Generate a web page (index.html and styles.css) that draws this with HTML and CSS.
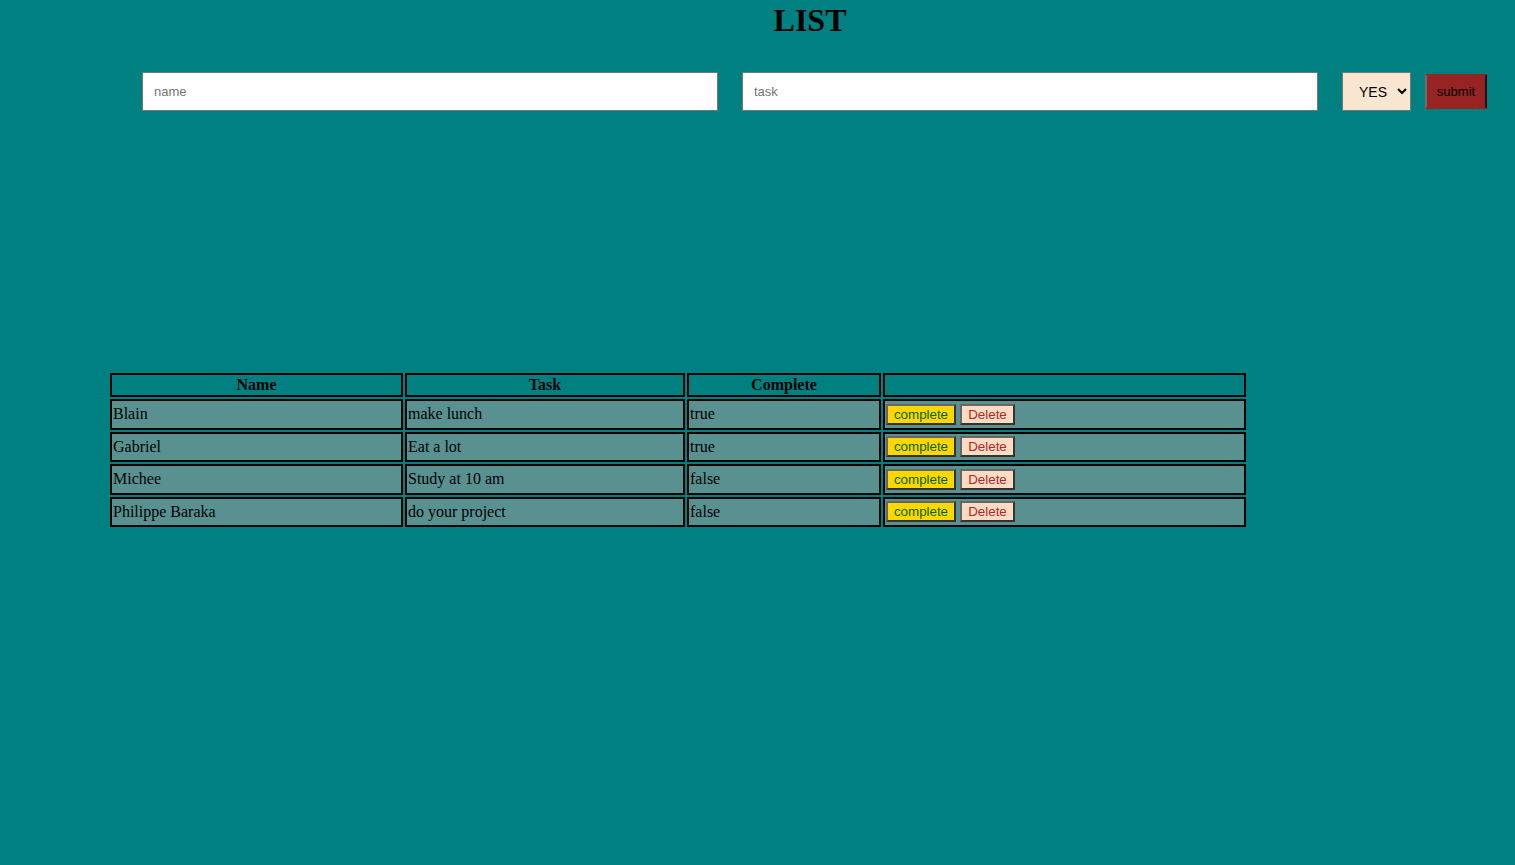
FILE: index.html
```html
<!DOCTYPE html>
<html>
<head>
<meta charset="utf-8">
<title>LIST</title>
<link rel="stylesheet" href="styles.css">
</head>
<body>
<h1 class="title">LIST</h1>
<form class="entry">
  <input class="field field-name" type="text" placeholder="name">
  <input class="field field-task" type="text" placeholder="task">
  <select class="choice">
    <option>YES</option>
    <option>NO</option>
  </select>
  <button class="submit" type="button">submit</button>
</form>
<table class="list">
  <thead>
    <tr>
      <th class="col-name">Name</th>
      <th class="col-task">Task</th>
      <th class="col-complete">Complete</th>
      <th class="col-actions"></th>
    </tr>
  </thead>
  <tbody>
    <tr>
      <td>Blain</td><td>make lunch</td><td>true</td>
      <td><button class="btn btn-complete">complete</button> <button class="btn btn-delete">Delete</button></td>
    </tr>
    <tr>
      <td>Gabriel</td><td>Eat a lot</td><td>true</td>
      <td><button class="btn btn-complete">complete</button> <button class="btn btn-delete">Delete</button></td>
    </tr>
    <tr>
      <td>Michee</td><td>Study at 10 am</td><td>false</td>
      <td><button class="btn btn-complete">complete</button> <button class="btn btn-delete">Delete</button></td>
    </tr>
    <tr>
      <td>Philippe Baraka</td><td>do your project</td><td>false</td>
      <td><button class="btn btn-complete">complete</button> <button class="btn btn-delete">Delete</button></td>
    </tr>
  </tbody>
</table>
</body>
</html>
```
FILE: styles.css
```css
html, body {
  margin: 0;
  padding: 0;
}
body {
  background: #008080;
  font-family: "Liberation Serif", "Times New Roman", serif;
  color: #000;
  min-height: 865px;
}
.title {
  margin: 0;
  padding: 2px 0 0 105px;
  text-align: center;
  font-size: 32px;
  line-height: 37px;
  font-weight: bold;
}
.entry {
  display: flex;
  align-items: center;
  margin-top: 33px;
  padding-left: 142px;
}
.field {
  box-sizing: border-box;
  width: 576px;
  height: 39px;
  border: 1px solid #767676;
  padding: 0 11px;
  font-family: "Liberation Sans", Arial, sans-serif;
  font-size: 13px;
  background: #fff;
  color: #000;
}
.field::placeholder {
  color: #757575;
}
.field-name {
  margin-right: 24px;
}
.field-task {
  margin-right: 24px;
}
.choice {
  box-sizing: border-box;
  width: 69px;
  height: 39px;
  border: 1px solid #767676;
  background: #f9e6d1;
  font-family: "Liberation Sans", Arial, sans-serif;
  font-size: 14px;
  padding: 0 0 0 12px;
  color: #000;
  margin-right: 14px;
}
.submit {
  box-sizing: border-box;
  width: 62px;
  height: 35px;
  background: #982323;
  border: 2px solid;
  border-color: #982323 #2a1010 #982323 #6e6e6e;
  font-family: "Liberation Sans", Arial, sans-serif;
  font-size: 13px;
  color: #000;
  padding: 0;
}
.list {
  margin: 260px 0 0 108px;
  width: 1140px;
  border-spacing: 2px;
  font-size: 16px;
}
.list th, .list td {
  border: 2px solid #000;
  padding: 1px;
}
.list th {
  height: 18px;
  line-height: 18px;
  text-align: center;
  font-weight: bold;
}
.list td {
  background: #599191;
  height: 24.5px;
  line-height: 18px;
  text-align: left;
  vertical-align: middle;
}
.col-name { width: 287px; }
.col-task { width: 274px; }
.col-complete { width: 188px; }
.btn {
  box-sizing: border-box;
  height: 21px;
  font-family: "Liberation Sans", Arial, sans-serif;
  font-size: 13.33px;
  padding: 0 5px;
  margin: 0;
  border: 2px solid;
  border-color: #666 #333 #333 #666;
  vertical-align: middle;
}
.btn-complete {
  background: #ffd700;
  color: #006400;
  width: 70px;
}
.btn-delete {
  background: #ffdbc4;
  color: #a52a2a;
  width: 55px;
}
```
